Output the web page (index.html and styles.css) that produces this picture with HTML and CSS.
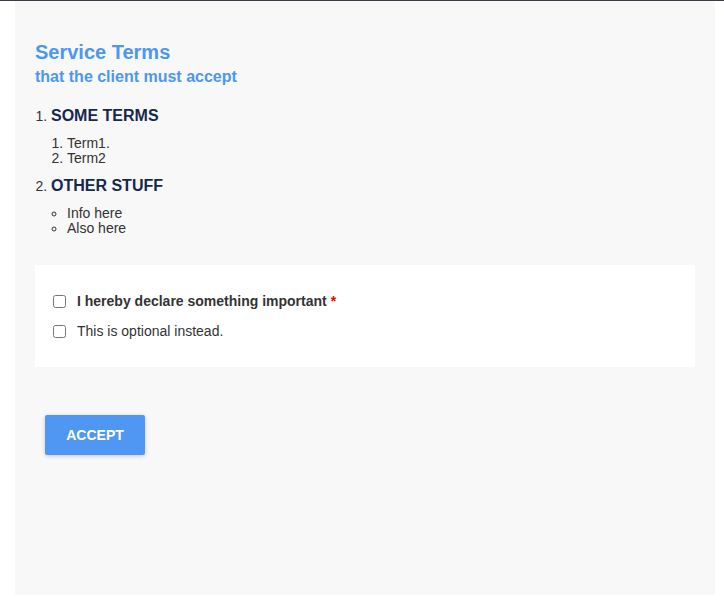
FILE: index.html
```html
<!DOCTYPE html>
<html>
<head>
<meta charset="utf-8">
<link rel="stylesheet" href="styles.css">
</head>
<body>
<div class="topbar"></div>
<main class="panel">
  <h1 class="title">Service Terms</h1>
  <h2 class="subtitle">that the client must accept</h2>
  <ol class="sections">
    <li>
      <h3 class="section-head">SOME TERMS</h3>
      <ol class="terms">
        <li>Term1.</li>
        <li>Term2</li>
      </ol>
    </li>
    <li>
      <h3 class="section-head">OTHER STUFF</h3>
      <ul class="info">
        <li>Info here</li>
        <li>Also here</li>
      </ul>
    </li>
  </ol>
  <form class="consent">
    <label class="check strong"><input type="checkbox"><span>I hereby declare something important <span class="req">*</span></span></label>
    <label class="check"><input type="checkbox"><span>This is optional instead.</span></label>
  </form>
  <div class="actions">
    <button class="accept" type="button">ACCEPT</button>
  </div>
</main>
</body>
</html>
```
FILE: styles.css
```css
html, body {
  margin: 0;
  padding: 0;
  background: #fff;
}
body {
  font-family: "Liberation Sans", Arial, sans-serif;
  color: #333;
}
.topbar {
  height: 1px;
  background: #3b3a46;
}
.panel {
  box-sizing: border-box;
  margin-left: 15px;
  width: 700px;
  height: 594px;
  background: #f8f8f8;
  padding: 40px 20px 0;
}
.title {
  margin: 0;
  font-size: 20px;
  line-height: 23px;
  font-weight: bold;
  color: #4c97f2;
}
.subtitle {
  margin: 4px 0 0;
  font-size: 16px;
  line-height: 18px;
  font-weight: bold;
  color: #4c97f2;
}
.sections {
  margin: 20px 0 0;
  padding-left: 16px;
  font-size: 14px;
}
.section-head {
  margin: 0;
  display: inline-block;
  font-size: 16px;
  line-height: 20px;
  font-weight: bold;
  color: #16284d;
}
.terms, .info {
  margin: 10px 0 10px;
  padding-left: 16px;
  font-size: 14px;
  line-height: 15px;
}
.info {
  list-style: circle;
  margin-bottom: 0;
}
.consent {
  margin-top: 29px;
  background: #fff;
  padding: 28px 18px 28px;
  display: flex;
  flex-direction: column;
  gap: 14px;
}
.check {
  display: flex;
  align-items: center;
  gap: 11px;
  font-size: 14px;
  line-height: 16px;
  color: #333;
}
.check input {
  margin: 0;
  width: 13px;
  height: 13px;
}
.strong {
  font-weight: bold;
}
.req {
  color: #e00;
}
.actions {
  padding: 48px 10px 0;
}
.accept {
  width: 100px;
  height: 40px;
  border: none;
  border-radius: 2px;
  background: #4f97f3;
  color: #fff;
  font-family: "Liberation Sans", Arial, sans-serif;
  font-size: 14px;
  font-weight: bold;
  box-shadow: 0 1px 4px rgba(0,0,0,0.2);
}
```
